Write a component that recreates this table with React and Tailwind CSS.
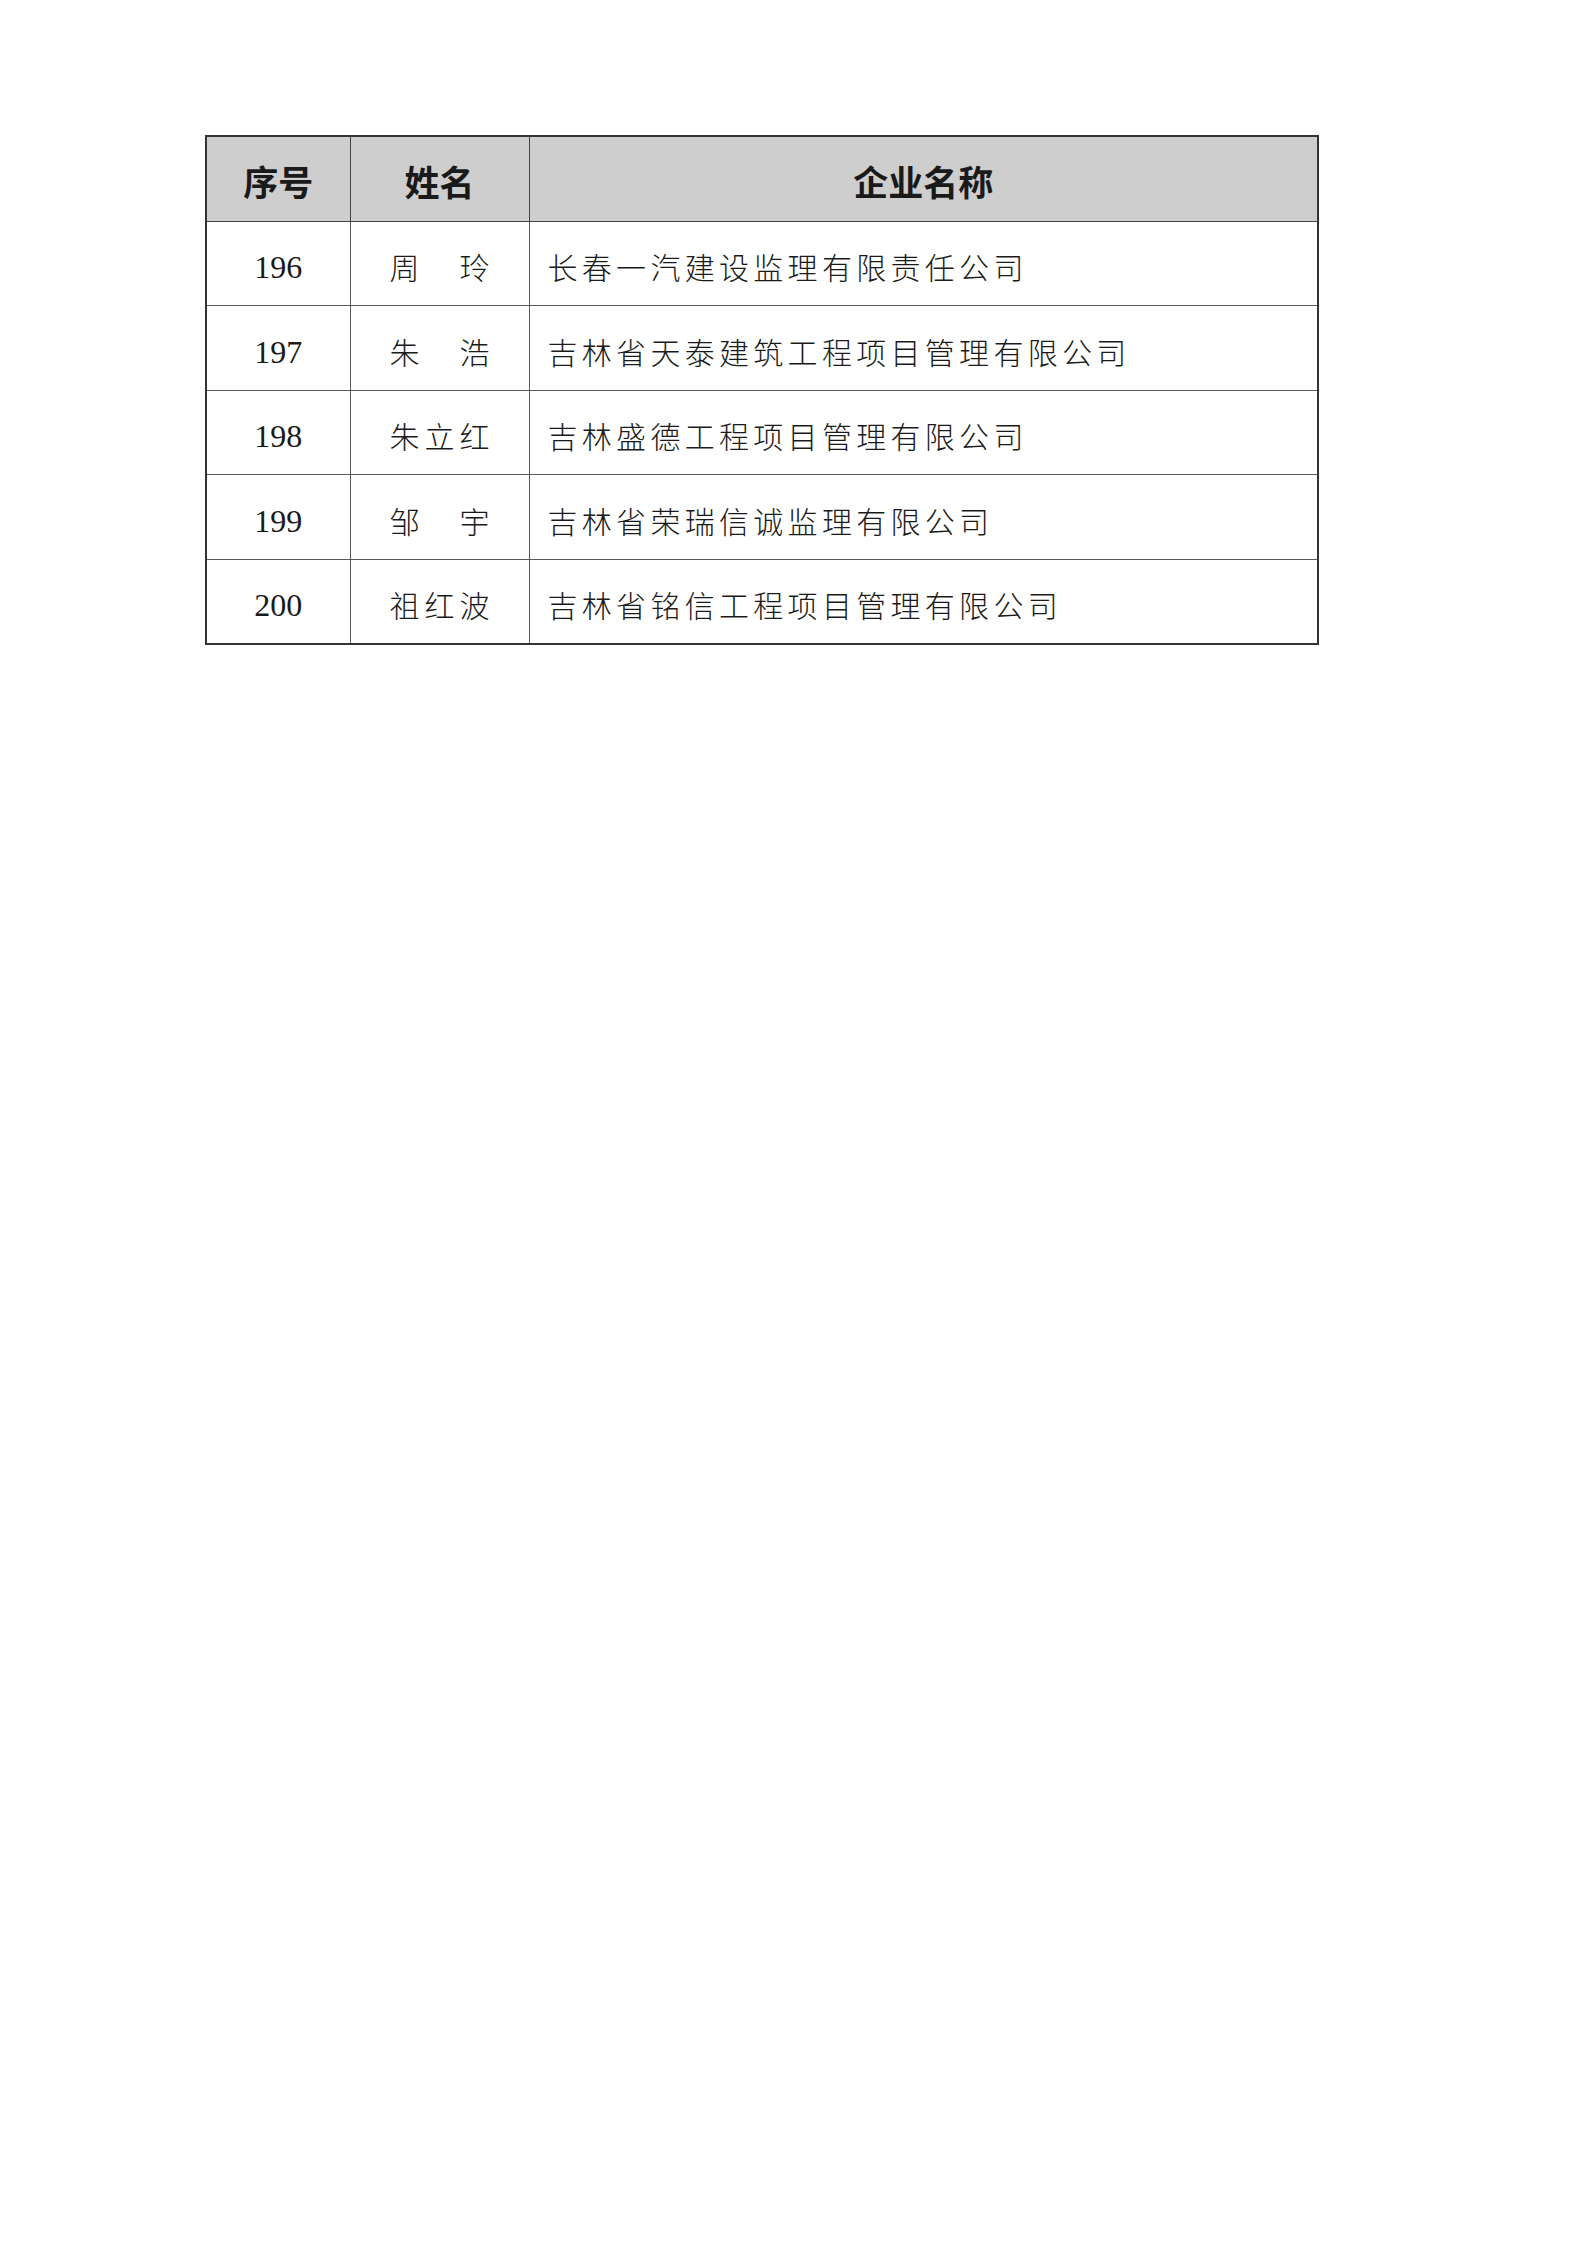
const ROWS = [
  { no: '196', name: '周　玲', company: '长春一汽建设监理有限责任公司' },
  { no: '197', name: '朱　浩', company: '吉林省天泰建筑工程项目管理有限公司' },
  { no: '198', name: '朱立红', company: '吉林盛德工程项目管理有限公司' },
  { no: '199', name: '邹　宇', company: '吉林省荣瑞信诚监理有限公司' },
  { no: '200', name: '祖红波', company: '吉林省铭信工程项目管理有限公司' },
];

const cjk = "font-['Noto_Sans_CJK_SC',sans-serif]";

export default function App() {
  return (
    <div className="min-h-[2245px] w-[1587px] bg-white pl-[205px] pt-[135px]">
      <table className="w-[1112px] table-fixed border-collapse border-2 border-[#333] text-[#1a1a1a]">
        <colgroup>
          <col className="w-[144px]" />
          <col className="w-[179px]" />
          <col className="w-[789px]" />
        </colgroup>
        <thead>
          <tr className="h-[85px] bg-[#cecece]">
            <th className={`border-[1.5px] border-[#444] pt-[4px] text-center align-middle text-[35px] font-bold ${cjk}`}>
              序号
            </th>
            <th className={`border-[1.5px] border-[#444] pt-[4px] text-center align-middle text-[35px] font-bold ${cjk}`}>
              姓名
            </th>
            <th className={`border-[1.5px] border-[#444] pt-[4px] text-center align-middle text-[35px] font-bold ${cjk}`}>
              企业名称
            </th>
          </tr>
        </thead>
        <tbody>
          {ROWS.map((row) => (
            <tr key={row.no} className="h-[84.6px]">
              <td className="border-[1.5px] border-[#5a5a5a] pt-[8px] text-center align-middle font-['Liberation_Serif',serif] text-[32px]">
                {row.no}
              </td>
              <td className={`border-[1.5px] border-[#5a5a5a] pt-[7px] text-center align-middle text-[30px] font-light tracking-[5px] ${cjk}`}>
                <span className="mr-[-5px]">{row.name}</span>
              </td>
              <td className={`border-[1.5px] border-[#5a5a5a] pl-[18px] pt-[7px] text-left align-middle text-[30px] font-light tracking-[4.3px] ${cjk}`}>
                {row.company}
              </td>
            </tr>
          ))}
        </tbody>
      </table>
    </div>
  );
}
